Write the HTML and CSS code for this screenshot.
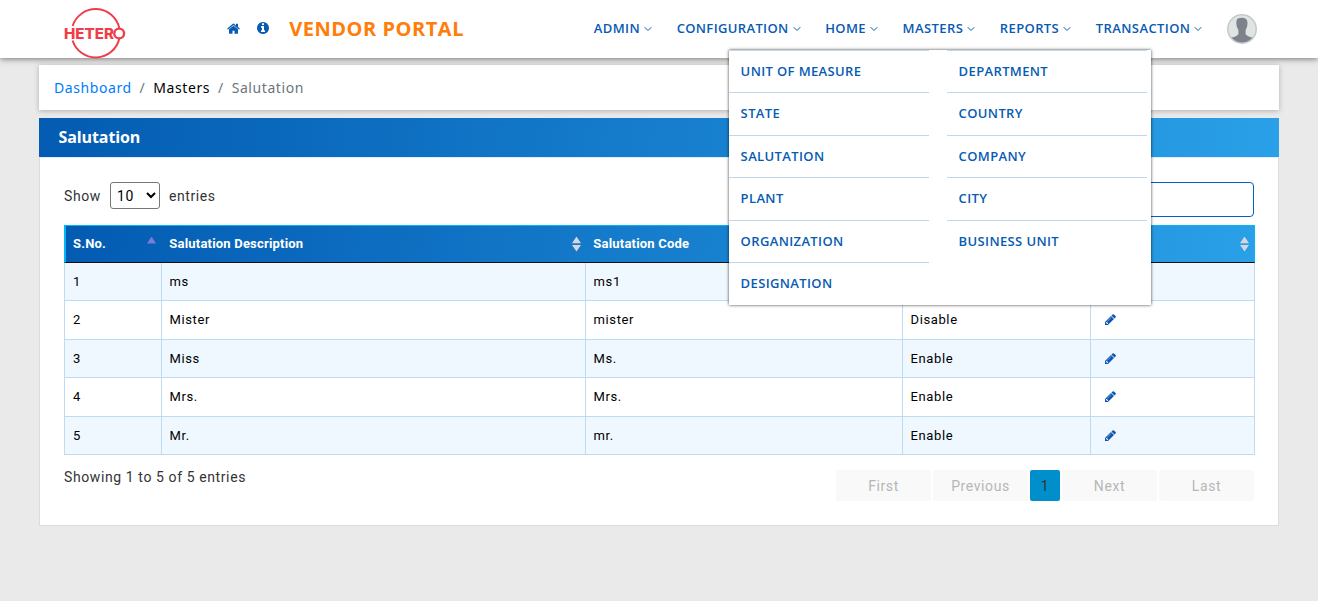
FILE: index.html
```
<!DOCTYPE html>
<html lang="en">
<head>
<meta charset="utf-8">
<title>Vendor Portal - Salutation</title>
<link rel="stylesheet" href="styles.css">
</head>
<body>
<svg class="defs" width="0" height="0" aria-hidden="true">
  <symbol id="chev" viewBox="0 0 8 6"><path d="M.7 1.2 4 4.5 7.3 1.2" fill="none" stroke="currentColor" stroke-width="1"/></symbol>
  <symbol id="pencil" viewBox="0 0 1536 1536"><path fill="currentColor" d="M363 1408l91-91-235-235-91 91v107h128v128h107zm523-928q0-22-22-22-10 0-17 7l-542 542q-7 7-7 17 0 22 22 22 10 0 17-7l542-542q7-7 7-17zm-54-192l416 416-832 832H0v-416l832-832zm683 96q0 53-37 90l-166 166-416-416 166-165q36-38 90-38 53 0 91 38l235 234q37 39 37 91z"/></symbol>
</svg>
<header class="topbar">
  <svg class="logo" viewBox="0 0 62 52" width="62" height="52">
    <g fill="none" stroke="#ef3e4a" stroke-width="2">
      <path d="M8.600 19A24.200 24.200 0 0 1 55.300 21M55.300 31.500A24.200 24.200 0 0 1 8.600 33.500"/>
      <circle cx="55.200" cy="26.500" r="4.900" stroke-width="2.400"/>
    </g>
    <text class="logo-text" x="0" y="31.700" textLength="50" lengthAdjust="spacingAndGlyphs">HETER</text>
  </svg>
  <div class="quick">
    <svg width="13" height="11" viewBox="0 0 1664 1312"><path fill="currentColor" d="M1408 768v480q0 26-19 45t-45 19H960V928H704v384H320q-26 0-45-19t-19-45V768q0-1 .5-3t.5-3l575-474 575 474q1 2 1 6zm223-69l-62 74q-8 9-21 11h-3q-13 0-21-7L832 200 140 777q-12 8-24 7-13-2-21-11l-62-74q-8-10-7-23.500T37 654L756 55q32-26 76-26t76 26l244 204V64q0-14 9-23t23-9h192q14 0 23 9t9 23v408l219 182q10 8 11 21.500T1631 699z"/></svg>
    <svg width="12" height="12" viewBox="0 0 1536 1536"><path fill="currentColor" d="M1024 1248v-160q0-14-9-23t-23-9h-96V544q0-14-9-23t-23-9H544q-14 0-23 9t-9 23v160q0 14 9 23t23 9h96v320h-96q-14 0-23 9t-9 23v160q0 14 9 23t23 9h448q14 0 23-9t9-23zM896 352V192q0-14-9-23t-23-9H672q-14 0-23 9t-9 23v160q0 14 9 23t23 9h192q14 0 23-9t9-23zm640 416q0 209-103 385.500T1153.500 1433 768 1536t-385.500-103T103 1153.500 0 768t103-385.500T382.500 103 768 0t385.500 103T1433 382.500 1536 768z"/></svg>
  </div>
  <h1 class="brand">VENDOR PORTAL</h1>
  <nav class="nav">
    <div class="nav-item"><span>ADMIN</span><svg><use href="#chev"/></svg></div>
    <div class="nav-item"><span>CONFIGURATION</span><svg><use href="#chev"/></svg></div>
    <div class="nav-item"><span>HOME</span><svg><use href="#chev"/></svg></div>
    <div class="nav-item"><span>MASTERS</span><svg><use href="#chev"/></svg>
      <div class="menu">
        <ul><li>UNIT OF MEASURE</li><li>STATE</li><li>SALUTATION</li><li>PLANT</li><li>ORGANIZATION</li><li>DESIGNATION</li></ul>
        <ul><li>DEPARTMENT</li><li>COUNTRY</li><li>COMPANY</li><li>CITY</li><li>BUSINESS UNIT</li></ul>
      </div>
    </div>
    <div class="nav-item"><span>REPORTS</span><svg><use href="#chev"/></svg></div>
    <div class="nav-item"><span>TRANSACTION</span><svg><use href="#chev"/></svg></div>
    <svg class="avatar" viewBox="0 0 30 30">
      <clipPath id="face"><circle cx="15" cy="15" r="13.500"/></clipPath>
      <circle cx="15" cy="15" r="14.200" fill="#dfe4e5" stroke="#c8c9ca" stroke-width="1.600"/>
      <path clip-path="url(#face)" fill="#7e828a" d="M9.400 8.500Q9.200 4.200 13 4Q19.600 3.200 20.300 7.500Q21 13 18.600 16v4q1 2.300 6.900 3.600V30H4.500v-6.400q6-1.300 6.900-3.600V16Q9 13 9.400 8.500z"/>
    </svg>
  </nav>
</header>
<main class="page">
  <div class="crumbs"><a>Dashboard</a><i>/</i><b>Masters</b><i>/</i><span>Salutation</span></div>
  <section class="card">
    <h2 class="card-title">Salutation</h2>
    <div class="card-body">
      <div class="tools">
        <label class="length">Show <select><option>10</option></select> entries</label>
        <input class="search" type="text">
      </div>
      <table class="grid">
        <colgroup><col class="c1"><col class="c2"><col class="c3"><col class="c4"><col class="c5"></colgroup>
        <thead><tr>
          <th><div>S.No.<s class="up"></s></div></th>
          <th><div>Salutation Description<s class="both"></s></div></th>
          <th><div>Salutation Code<s class="both"></s></div></th>
          <th><div>Status<s class="both"></s></div></th>
          <th><div>Edit<s class="both"></s></div></th>
        </tr></thead>
        <tbody>
          <tr><td>1</td><td>ms</td><td>ms1</td><td>Enable</td><td><svg><use href="#pencil"/></svg></td></tr>
          <tr><td>2</td><td>Mister</td><td>mister</td><td>Disable</td><td><svg><use href="#pencil"/></svg></td></tr>
          <tr><td>3</td><td>Miss</td><td>Ms.</td><td>Enable</td><td><svg><use href="#pencil"/></svg></td></tr>
          <tr><td>4</td><td>Mrs.</td><td>Mrs.</td><td>Enable</td><td><svg><use href="#pencil"/></svg></td></tr>
          <tr><td>5</td><td>Mr.</td><td>mr.</td><td>Enable</td><td><svg><use href="#pencil"/></svg></td></tr>
        </tbody>
      </table>
      <div class="foot">
        <div class="info">Showing 1 to 5 of 5 entries</div>
        <div class="pager"><span>First</span><span>Previous</span><span class="on">1</span><span>Next</span><span>Last</span></div>
      </div>
    </div>
  </section>
</main>
</body>
</html>
```
FILE: styles.css
```
* { box-sizing: border-box; }
body { margin: 0; min-height: 601px; background: #eaeaea; font-family: Roboto, sans-serif; font-size: 14px; letter-spacing: .6px; color: #333; overflow: hidden; }
.defs { position: absolute; }
.topbar { position: relative; z-index: 2; display: flex; align-items: center; height: 58px; padding: 0 61px 0 64px; background: #fff; box-shadow: 0 1px 6px rgba(0,0,0,.5); color: #075bb3; }
.logo { flex: none; margin-top: 7px; }
.logo-text { font: 800 14.5px Inter, sans-serif; fill: #ef3e4a; letter-spacing: 0; }
.quick { display: flex; align-items: center; gap: 17px; margin: -2px 0 0 100.6px; }
.brand { margin: -2px 0 0 20.6px; font: 700 20px "Open Sans", sans-serif; letter-spacing: .53px; color: #ff7d0a; white-space: nowrap; }
.nav { display: flex; align-items: center; gap: 24.6px; margin-left: auto; font: 600 13px "Open Sans", sans-serif; letter-spacing: .4px; }
.nav-item { position: relative; display: flex; align-items: center; gap: 4px; height: 58px; padding-bottom: 2px; }
.nav-item > svg { width: 8px; height: 6px; margin-top: 2px; }
.nav-item:nth-child(2) { letter-spacing: .36px; }
.nav-item:nth-child(6) { letter-spacing: .41px; }
.avatar { width: 30px; height: 30px; }
.menu { position: absolute; left: -174px; top: 50px; width: 422px; height: 255px; display: flex; gap: 18px; background: #fff; box-shadow: 0 0 3px rgba(0,0,0,.75); letter-spacing: .37px; }
.menu ul { width: 200px; margin: 0; padding: 0; list-style: none; }
.menu li { height: 42.45px; padding: 0 12px; border-top: 1px solid #bfd8f0; line-height: 41px; white-space: nowrap; }
.page { padding: 7px 39px 0; }
.crumbs { display: flex; align-items: center; height: 45px; padding: 0 15px; background: #fff; box-shadow: 0 1px 5px rgba(0,0,0,.25); font: 14px "Noto Sans", sans-serif; letter-spacing: .58px; color: #6c757d; }
.crumbs a { color: #007bff; }
.crumbs b { color: #000; font-weight: 400; }
.crumbs i { font-style: normal; margin: 0 7.9px; }
.card { margin-top: 8px; }
.card-title { height: 39px; margin: 0; padding-left: 19.5px; background: linear-gradient(100deg, #035bb2, #29a0e7); font: 700 16px/39px "Open Sans", sans-serif; letter-spacing: -.1px; color: #fff; }
.card-body { height: 369px; padding: 24px 24px 0; background: #fff; border: 1px solid #dadcdf; border-top-color: #e4ebf2; }
.tools { display: flex; justify-content: space-between; height: 43px; }
.length { display: flex; align-items: center; gap: 9px; height: 27px; }
.length select { width: 50px; height: 27px; padding: 0 2px; border: 1px solid #767676; border-radius: 3px; background: #fff; font: 14px Roboto, sans-serif; letter-spacing: .6px; color: #000; }
.search { width: 180px; height: 35px; border: 1px solid #075fba; border-radius: 4px; background: #fff; }
.grid { width: 1191px; table-layout: fixed; border-collapse: separate; border-spacing: 0; font-size: 13px; color: #000; }
.c1 { width: 98px; } .c2 { width: 424px; } .c3 { width: 317px; } .c4 { width: 188px; } .c5 { width: 164px; }
.grid thead tr { background: linear-gradient(100deg, #035bb2, #29a0e7); }
.grid th { height: 38px; padding: 0 5px 2px 7.3px; border-top: 1px solid #00b7f8; border-bottom: 1px solid #111; text-align: left; color: #fff; font-weight: 700; letter-spacing: .2px; }
.grid th:first-child { border-left: 2px solid #00b7f8; padding: 0 3px 2px 7px; }
.grid th:last-child { border-right: 1px solid #00b7f8; }
.grid th div { display: flex; align-items: center; justify-content: space-between; }
.up { width: 9px; height: 7px; margin: -6px 3px 0 0; background: #7d7bda; clip-path: polygon(50% 0, 100% 100%, 0 100%); }
.both { width: 9px; height: 15px; margin-top: 2px; background: #d5d7dc; clip-path: polygon(50% 0, 100% 45%, 0 45%, 0 56%, 100% 56%, 50% 100%, 0 56%, 0 45%); }
.grid td { height: 38.4px; padding: 0 8px .3px 7.6px; border-right: 1px solid #bfdaf3; border-bottom: 1px solid #bfdaf3; }
.grid td:first-child { border-left: 1px solid #bfdaf3; padding-left: 8px; }
.grid tbody tr:nth-child(odd) { background: #eff7ff; }
.grid td:last-child { padding-left: 14px; color: #0b55b5; }
.grid td svg { display: block; width: 11px; height: 11px; }
.foot { display: flex; justify-content: space-between; padding-top: 14px; }
.pager { display: flex; gap: 2px; padding-top: 1px; }
.pager span { width: 95px; height: 31px; border-radius: 2px; background: #f9f9f9; color: #b6b6b6; text-align: center; line-height: 33px; }
.pager .on { width: 30px; background: #008fcb; color: #333; }
```
